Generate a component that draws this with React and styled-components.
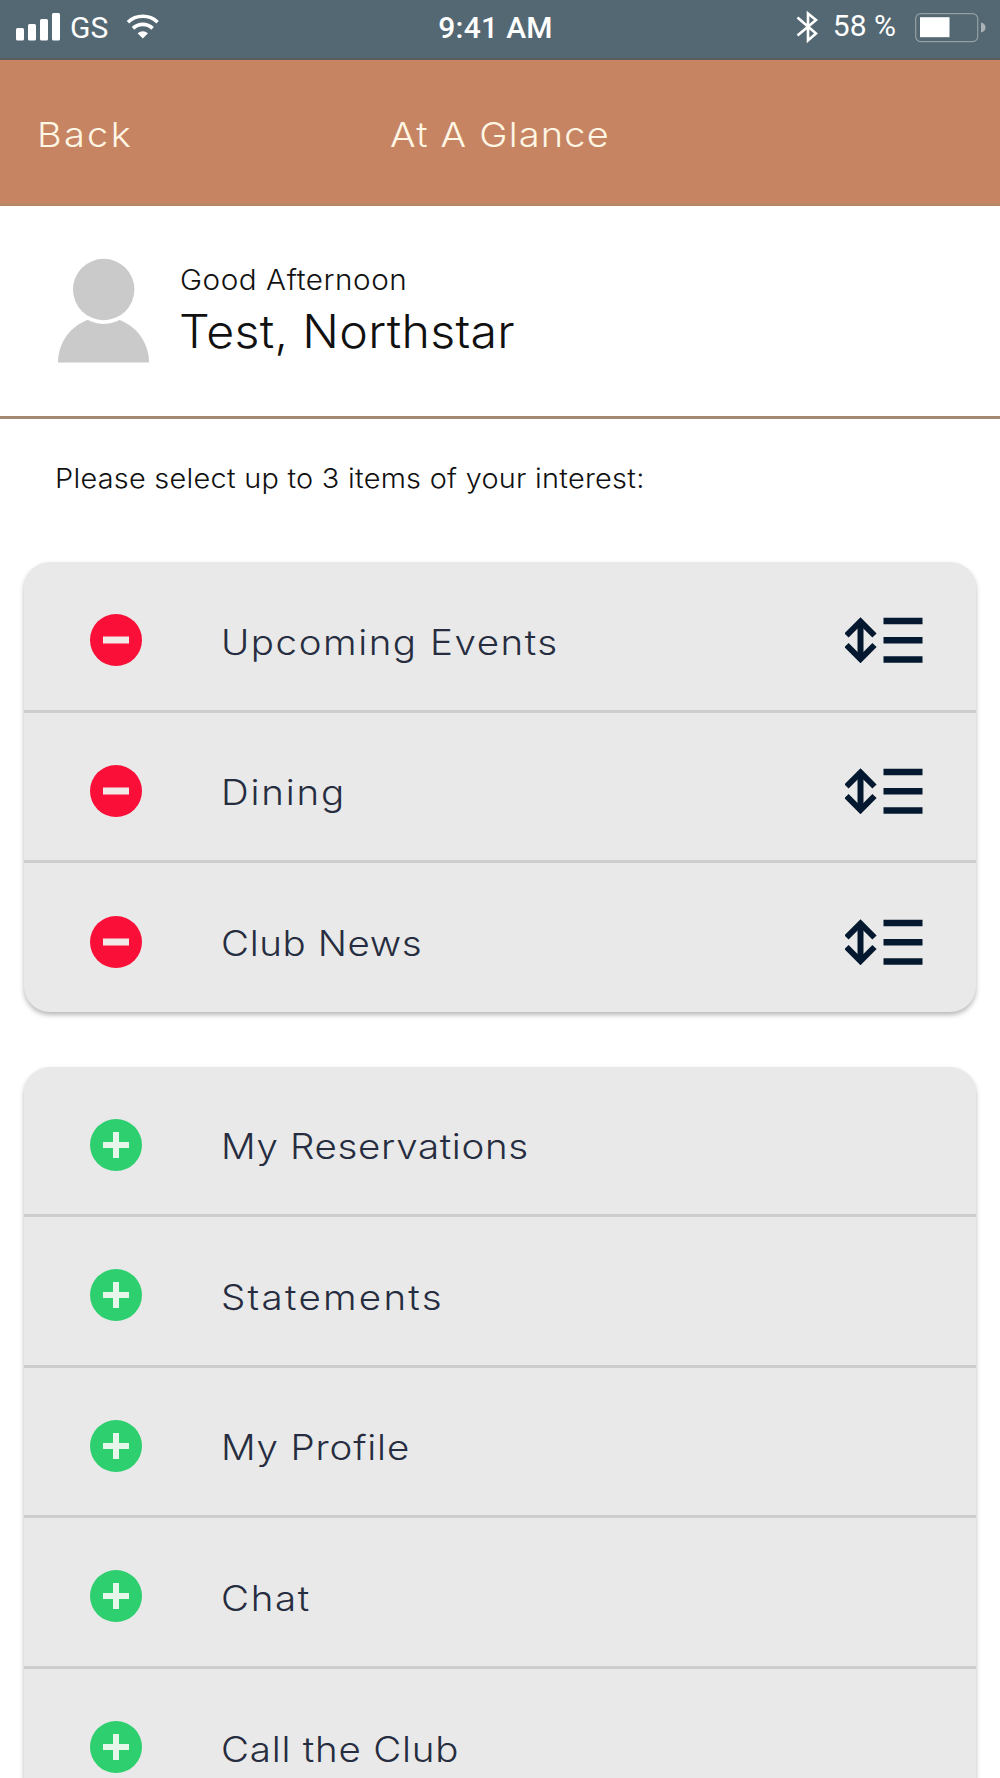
import React from 'react';
import styled, { createGlobalStyle } from 'styled-components';

const GlobalStyle = createGlobalStyle`
  * {
    box-sizing: border-box;
  }

  body {
    margin: 0;
    background: #fff;
    font-family: Inter, 'Open Sans', sans-serif;
  }
`

const StyledScreen = styled.div`
  display: flex;
  flex-direction: column;
  width: 1000px;
  height: 1778px;
  overflow: hidden;
  background: #fff;
`

const StyledStatusBar = styled.div`
  display: grid;
  grid-template-columns: 1fr auto 1fr;
  flex: none;
  height: 60px;
  padding: 0 14px 0 16px;
  background: #536872;
  border-bottom: 2px solid #5b5a5c;
  color: #fff;
  font-family: Roboto, sans-serif;
  font-size: 30px;
  line-height: 36px;
`

const StyledStatusGroup = styled.div`
  display: flex;
  align-items: flex-start;
  justify-content: ${props => props.$end ? 'flex-end' : 'flex-start'};

  svg {
    display: block;
    flex: none;
  }
`

const StyledStatusText = styled.span`
  margin: ${props => props.$margin};
  font-weight: ${props => props.$bold ? 500 : 400};
  letter-spacing: ${props => props.$tracking || 0}px;
  white-space: nowrap;
`

const StyledHeader = styled.header`
  display: grid;
  grid-template-columns: 1fr auto 1fr;
  align-items: center;
  flex: none;
  height: 146px;
  padding: 5px 37px 0;
  background: #c68462;
  border-bottom: 3px solid #b88766;
  color: #fff6e4;
  font-size: 34.5px;
  font-weight: 300;
`

const StyledBack = styled.button`
  justify-self: start;
  padding: 0;
  border: 0;
  background: none;
  color: inherit;
  font: inherit;
  letter-spacing: 2.1px;
  transform: scaleX(1.1);
  transform-origin: left;
`

const StyledTitle = styled.h1`
  margin: 0;
  font-size: inherit;
  font-weight: inherit;
  letter-spacing: 1.1px;
  transform: scaleX(1.1);
`

const StyledProfile = styled.section`
  display: flex;
  flex: none;
  height: 213px;
  padding: 52px 0 0 58px;
  border-bottom: 3px solid #a2896f;

  svg {
    display: block;
    flex: none;
  }
`

const StyledGreeting = styled.div`
  margin: 4px 0 0 30px;
  color: #111;
`

const StyledSalutation = styled.div`
  font-size: 28px;
  line-height: 36px;
  font-weight: 300;
  letter-spacing: 0.5px;
  transform: scaleX(1.06);
  transform-origin: left;
`

const StyledName = styled.div`
  margin: 5px 0 0 -1px;
  font-size: 46px;
  line-height: 56px;
  font-weight: 300;
  letter-spacing: 0.3px;
  transform: scaleX(1.05);
  transform-origin: left;
`

const StyledPrompt = styled.p`
  flex: none;
  height: 143px;
  margin: 0;
  padding: 41px 0 0;
  margin-left: 55px;
  color: #111;
  font-size: 27.5px;
  line-height: 36px;
  font-weight: 300;
  letter-spacing: 0.25px;
  white-space: nowrap;
  transform: scaleX(1.05);
  transform-origin: left;
`

const StyledCard = styled.ul`
  flex: none;
  margin: 0 24px 55px;
  padding: 0;
  list-style: none;
  border-radius: 26px;
  background: #e9e9e9;
  box-shadow: 0 3px 5px rgba(0, 0, 0, 0.28);
`

const StyledRow = styled.li`
  display: flex;
  align-items: center;
  height: 150.5px;
  padding: 8.5px 53px 0 66px;
  border-bottom: 3px solid #cdcdcd;

  &:last-child {
    height: 148.5px;
    border-bottom: 0;
  }

  svg {
    display: block;
    flex: none;
  }
`

const StyledLabel = styled.span`
  flex: 1;
  margin-left: 79px;
  padding-top: 3px;
  color: #272d40;
  font-size: 35px;
  line-height: 44px;
  font-weight: 300;
  letter-spacing: ${props => props.$tracking}px;
  transform: scaleX(1.1);
  transform-origin: left;
`

const SignalIcon = () => (
  <svg width="45" height="41" viewBox="0 0 45 41" fill="#fff">
    <rect x="0" y="28" width="8" height="12.5" rx="1.5" />
    <rect x="12" y="24" width="8" height="16.5" rx="1.5" />
    <rect x="24" y="19" width="8" height="21.5" rx="1.5" />
    <rect x="36" y="13" width="8" height="27.5" rx="1.5" />
  </svg>
)

const WifiIcon = () => (
  <svg width="34" height="41" viewBox="0 0 34 41" fill="none" stroke="#fff" strokeWidth="3.6">
    <path d="M2 22.2a21.5 21.5 0 0 1 29.6 0" />
    <path d="M7 28.4a14 14 0 0 1 19.6 0" />
    <path d="M11.6 33.2q5.2-4 10.4 0l-5.2 5.2z" fill="#fff" stroke="none" />
  </svg>
)

const BluetoothIcon = () => (
  <svg width="22" height="44" viewBox="0 0 22 44" fill="none" stroke="#fff" strokeWidth="2.6">
    <path d="M1.5 17.5L20 33.5 12 40.5V13.500L20 20 1.500 35.500" />
  </svg>
)

const BatteryIcon = () => (
  <svg width="71" height="43" viewBox="0 0 71 43">
    <rect x="0.7" y="13.6" width="62" height="28" rx="5" fill="none" stroke="#93a0a6" strokeWidth="1.2" />
    <rect x="5" y="17.2" width="29.5" height="20" fill="#fff" />
    <path d="M66 22.5q4.500 1 4.500 5t-4.500 5z" fill="#a9b3b8" />
  </svg>
)

const Avatar = () => (
  <svg width="92" height="105" viewBox="0 0 92 105" fill="#cacaca">
    <path d="M0 104.500a45.500 45.500 0 0 1 91 0z" />
    <circle cx="45.7" cy="31.5" r="34.5" fill="#fff" />
    <circle cx="45.7" cy="31.5" r="30.7" />
  </svg>
)

const RemoveIcon = () => (
  <svg width="52" height="52" viewBox="0 0 52 52">
    <circle cx="26" cy="26" r="26" fill="#f90f38" />
    <rect x="13" y="22.5" width="26" height="7" fill="#f2e9e9" />
  </svg>
)

const AddIcon = () => (
  <svg width="52" height="52" viewBox="0 0 52 52">
    <circle cx="26" cy="26" r="26" fill="#2ecf6f" />
    <path d="M13 23h10V13h6v10h10v6H29v10h-6V29H13z" fill="#e6f6ea" />
  </svg>
)

const ReorderIcon = () => (
  <svg width="78" height="46" viewBox="0 0 78 46" fill="none" stroke="#04192f" strokeWidth="6.5">
    <path d="M38.5 4H77.500M38.500 23.200H77.500M38.500 42.400H77.500" />
    <path d="M1.500 18.500L15.500 4.500l14 14M1.500 28L15.500 42 29.500 28" strokeWidth="6" />
    <path d="M15.500 4v38" strokeWidth="6" />
  </svg>
)

const selected = [
  { label: 'Upcoming Events', tracking: 1.4 },
  { label: 'Dining', tracking: 1.65 },
  { label: 'Club News', tracking: 0.55 },
];

const available = [
  { label: 'My Reservations', tracking: 0.6 },
  { label: 'Statements', tracking: 2.05 },
  { label: 'My Profile', tracking: 0.75 },
  { label: 'Chat', tracking: 1.5 },
  { label: 'Call the Club', tracking: 0.7 },
];

const App = () => {
  return (
    <>
      <GlobalStyle />
      <StyledScreen>
        <StyledStatusBar>
          <StyledStatusGroup>
            <SignalIcon />
            <StyledStatusText $margin="10px 18px 0 9px">GS</StyledStatusText>
            <WifiIcon />
          </StyledStatusGroup>
          <StyledStatusText $bold $tracking={0.3} $margin="10px 0 0 -11px">9:41 AM</StyledStatusText>
          <StyledStatusGroup $end>
            <BluetoothIcon />
            <StyledStatusText $margin="8px 19px 0 15px">58 %</StyledStatusText>
            <BatteryIcon />
          </StyledStatusGroup>
        </StyledStatusBar>
        <StyledHeader>
          <StyledBack>Back</StyledBack>
          <StyledTitle>At A Glance</StyledTitle>
        </StyledHeader>
        <StyledProfile>
          <Avatar />
          <StyledGreeting>
            <StyledSalutation>Good Afternoon</StyledSalutation>
            <StyledName>Test, Northstar</StyledName>
          </StyledGreeting>
        </StyledProfile>
        <StyledPrompt>Please select up to 3 items of your interest:</StyledPrompt>
        <StyledCard>
          {selected.map(x => (
            <StyledRow key={x.label}>
              <RemoveIcon />
              <StyledLabel $tracking={x.tracking}>{x.label}</StyledLabel>
              <ReorderIcon />
            </StyledRow>
          ))}
        </StyledCard>
        <StyledCard>
          {available.map(x => (
            <StyledRow key={x.label}>
              <AddIcon />
              <StyledLabel $tracking={x.tracking}>{x.label}</StyledLabel>
            </StyledRow>
          ))}
        </StyledCard>
      </StyledScreen>
    </>
  )
}

export default App;
